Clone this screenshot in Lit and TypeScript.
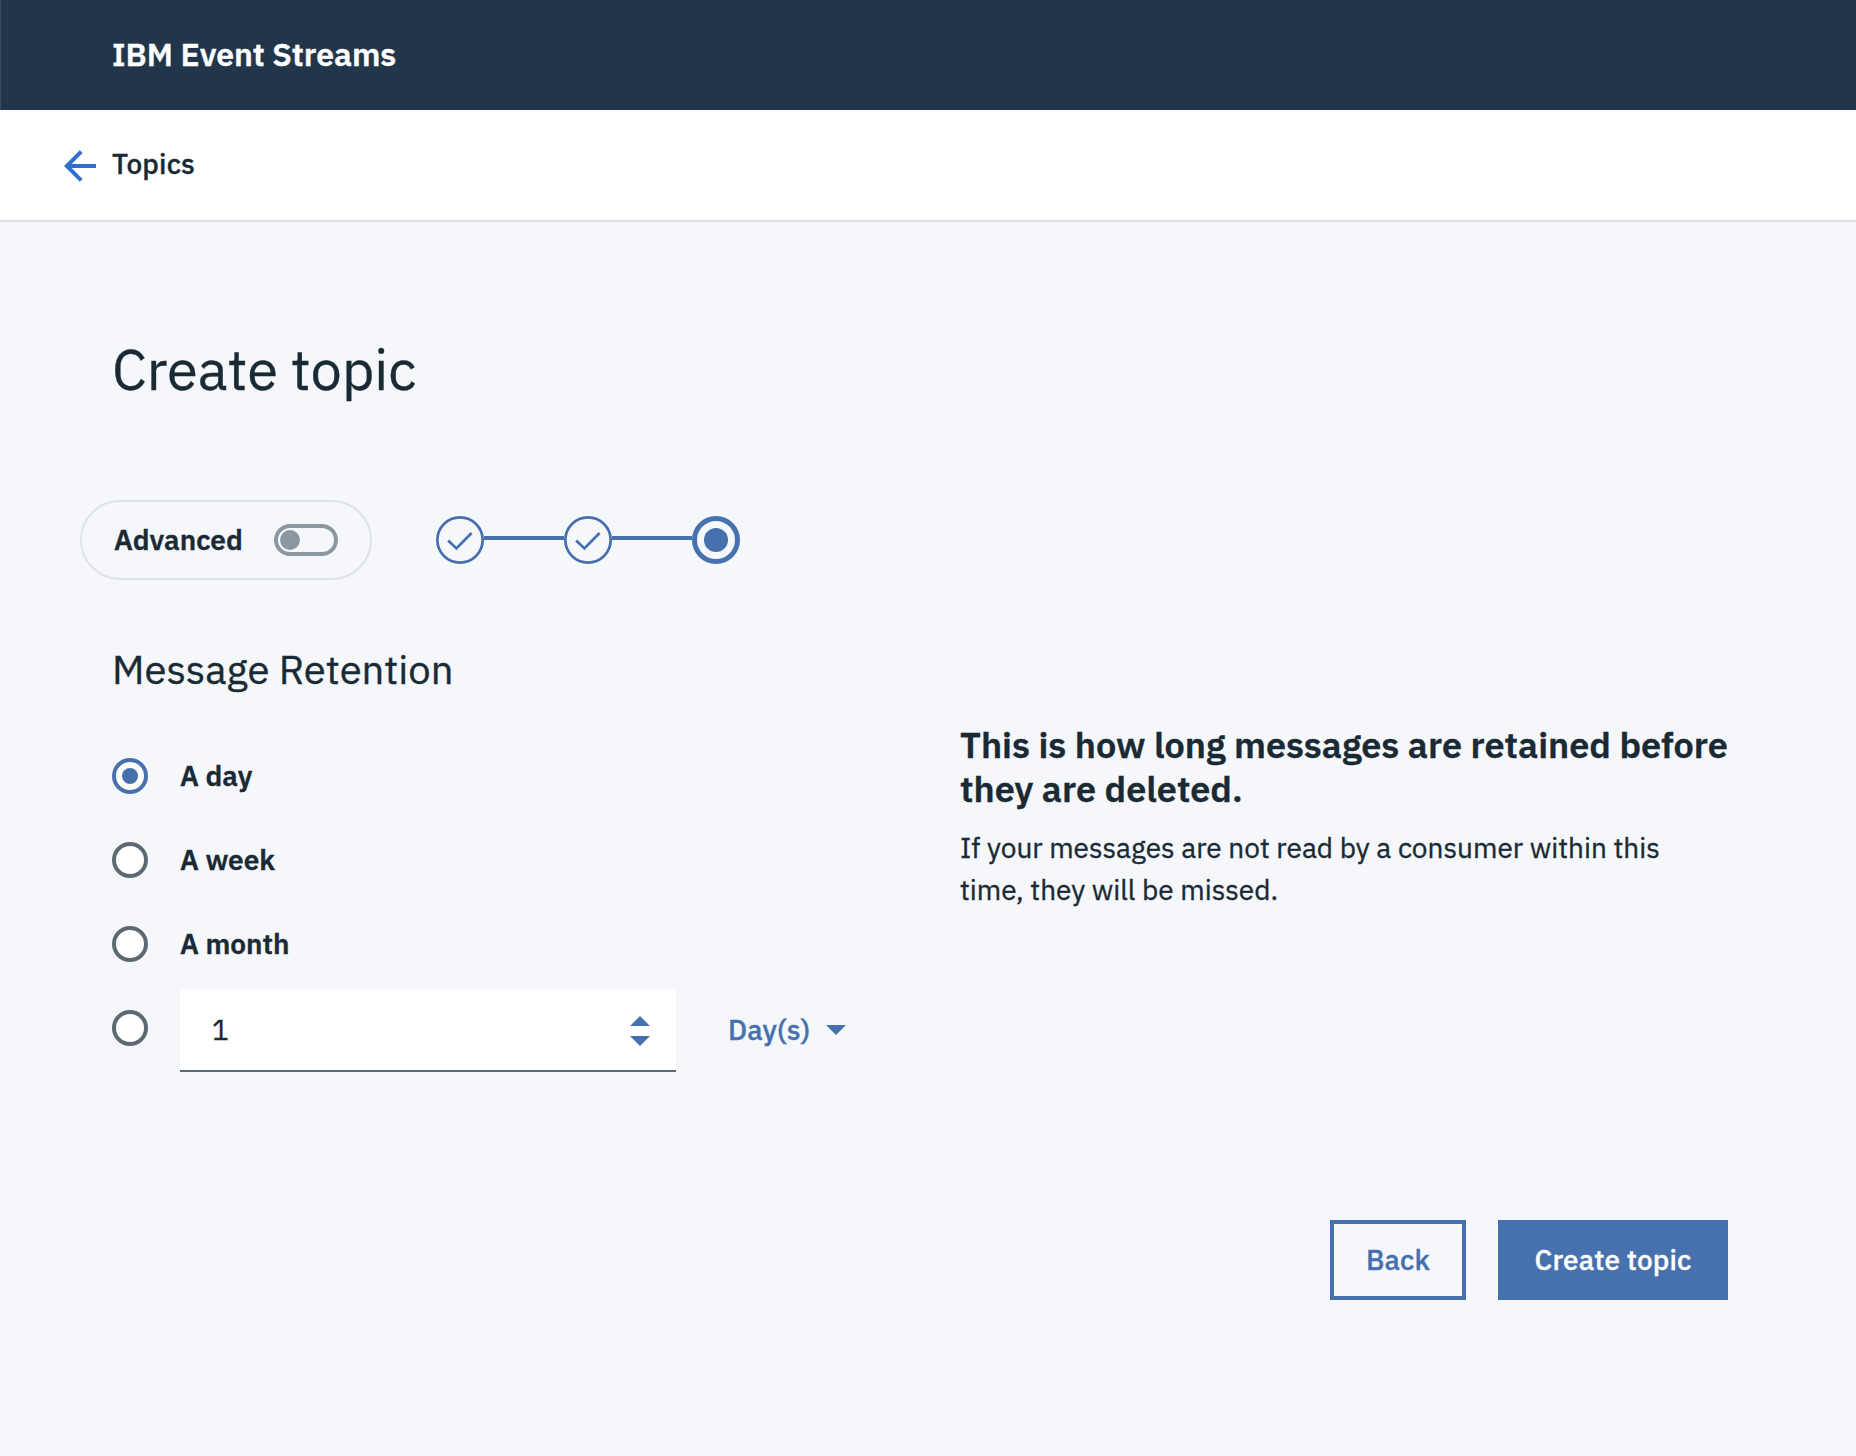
import { LitElement, html, css, svg } from "lit";
import { customElement, property, state } from "lit/decorators.js";

type StepState = "complete" | "current";

@customElement("step-indicator")
export class StepIndicator extends LitElement {
  @property({ attribute: false }) steps: StepState[] = [];

  static styles = css`
    :host {
      display: flex;
      align-items: center;
    }
    .icon {
      display: block;
      width: 48px;
      height: 48px;
      flex: none;
      fill: none;
      stroke: #4671ae;
    }
    .dot {
      fill: #4671ae;
      stroke: none;
    }
    .line {
      width: 80px;
      height: 4px;
      margin-bottom: 4px;
      background: #4671ae;
    }
  `;

  render() {
    return this.steps.map(
      (step, i) => html`
        ${i > 0 ? html`<div class="line"></div>` : null}
        <svg class="icon" viewBox="0 0 48 48">
          ${step === "complete"
            ? svg`<circle cx="24" cy="24" r="22.65" stroke-width="2.7"/>
                <path d="M12.2 24.6L20.4 32.4L35.6 17" stroke-width="2.8"/>`
            : svg`<circle cx="24" cy="24" r="21.5" stroke-width="5"/>
                <circle class="dot" cx="24" cy="24" r="12"/>`}
        </svg>
      `
    );
  }
}

@customElement("app-root")
export class AppRoot extends LitElement {
  @state() private selected = 0;

  private readonly options = ["A day", "A week", "A month"];

  static styles = css`
    :host {
      display: block;
      min-height: 1456px;
      background: #f5f7fb;
      color: #1a2a34;
      font-family: "IBM Plex Sans", Roboto, sans-serif;
      font-size: 28px;
      line-height: 37px;
      -webkit-text-stroke: 0.35px currentColor;
    }
    * {
      box-sizing: border-box;
    }
    h1,
    h2,
    h3,
    p {
      margin: 0;
    }
    .header {
      display: flex;
      align-items: center;
      height: 110px;
      padding: 0 0 2px 111px;
      border-left: 1px solid #384a5e;
      background: #22364b;
      color: #fff;
      font-size: 32px;
      font-weight: 600;
      line-height: 42px;
    }
    .crumb {
      display: flex;
      align-items: center;
      gap: 16px;
      height: 112px;
      padding-left: 64px;
      border-bottom: 2px solid #dfe2e7;
      background: #fff;
      font-weight: 500;
      letter-spacing: 0.15px;
    }
    .back-arrow {
      width: 32px;
      height: 32px;
      margin-top: 2px;
      fill: none;
      stroke: #326ed0;
      stroke-width: 4;
    }
    .crumb-label {
      margin-bottom: 3px;
    }
    .main {
      padding: 111px 128px 0 112px;
    }
    .title {
      font-size: 56px;
      line-height: 72px;
      font-weight: 400;
    }
    .progress {
      display: flex;
      align-items: center;
      gap: 64px;
      margin: 95px 0 0 -32px;
    }
    .advanced {
      display: flex;
      align-items: center;
      justify-content: space-between;
      width: 292px;
      height: 80px;
      padding: 0 32px;
      border: 2px solid #dfe2e7;
      border-radius: 40px;
      font-weight: 600;
    }
    .label {
      margin-bottom: 1px;
    }
    .toggle {
      display: flex;
      align-items: center;
      width: 64px;
      height: 32px;
      padding-left: 2px;
      border: 4px solid #8b98a1;
      border-radius: 16px;
    }
    .knob {
      width: 20px;
      height: 20px;
      border-radius: 50%;
      background: #8b98a1;
    }
    .columns {
      display: grid;
      grid-template-columns: 848px 768px;
      margin-top: 63px;
    }
    .section {
      font-size: 40px;
      line-height: 52px;
      font-weight: 400;
      margin-bottom: 39px;
    }
    .option {
      display: flex;
      align-items: center;
      gap: 32px;
      height: 84px;
      font-weight: 600;
    }
    .radio {
      display: flex;
      align-items: center;
      justify-content: center;
      flex: none;
      width: 36px;
      height: 36px;
      border: 4px solid #5d6971;
      border-radius: 50%;
      background: #fff;
    }
    .radio.on {
      border-color: #4671ae;
    }
    .radio.on::after {
      content: "";
      width: 16px;
      height: 16px;
      border-radius: 50%;
      background: #4671ae;
    }
    .custom {
      display: flex;
      gap: 32px;
      padding-top: 4px;
    }
    .custom .radio {
      margin-top: 20px;
    }
    .number {
      display: flex;
      align-items: center;
      justify-content: space-between;
      width: 496px;
      height: 82px;
      padding: 0 26px 0 32px;
      border-bottom: 2px solid #5d6971;
      background: #fff;
    }
    .spinner {
      width: 20px;
      height: 30px;
      margin-top: 2px;
      fill: #4671ae;
    }
    .unit {
      display: flex;
      align-items: center;
      gap: 16px;
      height: 80px;
      margin-left: 20px;
      color: #4671ae;
      font-weight: 500;
      letter-spacing: 0.15px;
    }
    .caret {
      width: 20px;
      height: 10px;
      fill: #4671ae;
    }
    .info {
      padding-top: 79.5px;
    }
    .info-title {
      font-size: 36px;
      line-height: 44px;
      font-weight: 600;
      margin-bottom: 16px;
    }
    .info-text {
      width: 720px;
      line-height: 42px;
    }
    .actions {
      display: flex;
      justify-content: flex-end;
      gap: 32px;
      margin-top: 148px;
    }
    .button {
      display: flex;
      align-items: center;
      justify-content: center;
      width: 230px;
      height: 80px;
      padding: 0 0 1px;
      border: 4px solid #4671ae;
      border-radius: 0;
      background: #4671ae;
      color: #fff;
      font: inherit;
      font-weight: 500;
      letter-spacing: 0.12px;
    }
    .button.secondary {
      width: 136px;
      background: transparent;
      color: #4671ae;
    }
  `;

  render() {
    return html`
      <header class="header">IBM Event Streams</header>
      <nav class="crumb">
        <svg class="back-arrow" viewBox="0 0 32 32">
          <path d="M32 16H3M17.2 1.6L2.8 16L17.2 30.4" />
        </svg>
        <span class="crumb-label">Topics</span>
      </nav>
      <main class="main">
        <h1 class="title">Create topic</h1>
        <div class="progress">
          <div class="advanced">
            <span class="label">Advanced</span>
            <div class="toggle"><div class="knob"></div></div>
          </div>
          <step-indicator .steps=${["complete", "complete", "current"] as StepState[]}></step-indicator>
        </div>
        <div class="columns">
          <section>
            <h2 class="section">Message Retention</h2>
            ${this.options.map(
              (label, i) => html`
                <div class="option" @click=${() => (this.selected = i)}>
                  <span class="radio ${this.selected === i ? "on" : ""}"></span>
                  <span class="label">${label}</span>
                </div>
              `
            )}
            <div class="custom">
              <span class="radio ${this.selected === 3 ? "on" : ""}" @click=${() => (this.selected = 3)}></span>
              <div class="number">
                <span class="label">1</span>
                <svg class="spinner" viewBox="0 0 20 30">
                  <path d="M0 10L10 0L20 10ZM0 20L10 30L20 20Z" />
                </svg>
              </div>
              <div class="unit">
                <span class="label">Day(s)</span>
                <svg class="caret" viewBox="0 0 20 10"><path d="M0 0H20L10 10Z" /></svg>
              </div>
            </div>
          </section>
          <aside class="info">
            <h3 class="info-title">This is how long messages are retained before they are deleted.</h3>
            <p class="info-text">
              If your messages are not read by a consumer within this time, they will be missed.
            </p>
          </aside>
        </div>
        <div class="actions">
          <button class="button secondary">Back</button>
          <button class="button">Create topic</button>
        </div>
      </main>
    `;
  }
}
